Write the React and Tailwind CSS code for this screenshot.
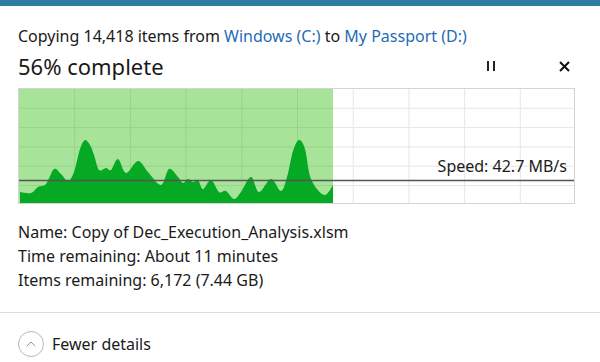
import { ChevronUp } from 'lucide-react'

const AREA = [
  [1, 105], [12, 106], [19, 100], [27, 97], [35, 82], [42, 87], [49, 94], [55, 85],
  [61, 62], [66, 53], [71, 58], [75, 68], [80, 83], [87, 81], [92, 83], [99, 72], [107, 86], [119, 74],
  [129, 85], [142, 98], [150, 82], [159, 90], [164, 96], [169, 92], [174, 95], [179, 93],
  [184, 102], [192, 93], [200, 105], [207, 104], [215, 112], [222, 105], [232, 90],
  [240, 105], [252, 92], [262, 104], [268, 90], [274, 64], [280, 53], [286, 62], [292, 92],
  [305, 108], [314, 98],
]

// catmull-rom through the sample points for the soft hills
function areaPath() {
  const p = AREA
  let d = `M1 116 L${p[0][0]} ${p[0][1]}`
  for (let i = 0; i < p.length - 1; i++) {
    const a = p[i - 1] || p[i]
    const b = p[i]
    const c = p[i + 1]
    const e = p[i + 2] || c
    const c1x = b[0] + (c[0] - a[0]) / 6
    const c1y = b[1] + (c[1] - a[1]) / 6
    const c2x = c[0] - (e[0] - b[0]) / 6
    const c2y = c[1] - (e[1] - b[1]) / 6
    d += ` C${c1x} ${c1y} ${c2x} ${c2y} ${c[0]} ${c[1]}`
  }
  d += ' L314 116 Z'
  return d
}

function SpeedChart() {
  const cols = [1, 2, 3, 4, 5, 6, 7, 8, 9].map(i => i * 55.7)
  const rows = [1, 2, 3, 4, 5].map(i => i * 19.3)
  return (
    <div className="relative mt-[8px] h-[116px] w-[557px] border border-[#d4d4d4]">
      <svg width="555" height="114" className="block">
        <rect x="0" y="0" width="314" height="114" fill="#a8e39a" />
        {cols.map(x => (
          <line key={x} x1={x} y1="0" x2={x} y2="114" stroke={x < 314 ? '#96d489' : '#e6e6e6'} strokeWidth="1" />
        ))}
        {rows.map(y => (
          <g key={y}>
            <line x1="0" y1={y} x2="314" y2={y} stroke="#96d489" strokeWidth="1" />
            <line x1="314" y1={y} x2="555" y2={y} stroke="#e6e6e6" strokeWidth="1" />
          </g>
        ))}
        <path d={areaPath()} transform="translate(0,-2)" fill="#06a923" />
        <line x1="0" y1="91.5" x2="555" y2="91.5" stroke="#555" strokeWidth="1.5" />
      </svg>
      <div className="absolute right-[7px] top-[69px] text-[16px] leading-none text-[#1a1a1a]">Speed: 42.7 MB/s</div>
    </div>
  )
}

export default function App() {
  return (
    <div className="h-[362px] w-[600px] overflow-hidden bg-white font-['Noto_Sans',sans-serif] text-[#1a1a1a]">
      <div className="h-[6px] bg-[#2d7ea3]" />
      <div className="px-[18px] pt-[19px]">
        <div className="text-[16px] leading-[22px]">
          Copying 14,418 items from <span className="text-[#1f6cb3]">Windows (C:)</span> to{' '}
          <span className="text-[#1f6cb3]">My Passport (D:)</span>
        </div>
        <div className="mt-[5px] flex h-[28px] items-center">
          <div className="flex-1 text-[22px] leading-[28px]">56% complete</div>
          <div className="mr-[64px] flex gap-[4px]">
            <span className="h-[10px] w-[2px] bg-[#222]" />
            <span className="h-[10px] w-[2px] bg-[#222]" />
          </div>
          <svg width="11" height="11" viewBox="0 0 11 11" className="mr-[12px]">
            <path d="M1 1 L10 10 M10 1 L1 10" stroke="#111" strokeWidth="2" />
          </svg>
        </div>
        <SpeedChart />
        <div className="mt-[16px] text-[16px] leading-[24px]">
          <div>Name: Copy of Dec_Execution_Analysis.xlsm</div>
          <div>Time remaining: About 11 minutes</div>
          <div>Items remaining: 6,172 (7.44 GB)</div>
        </div>
      </div>
      <div className="mt-[20px] border-t border-[#dedede] px-[18px] pt-[18px]">
        <div className="flex items-center gap-[8px]">
          <div className="flex h-[26px] w-[26px] items-center justify-center rounded-full border border-[#b8b8b8]">
            <ChevronUp size={16} strokeWidth={1.2} color="#777" />
          </div>
          <span className="text-[16px] leading-none">Fewer details</span>
        </div>
      </div>
    </div>
  )
}
